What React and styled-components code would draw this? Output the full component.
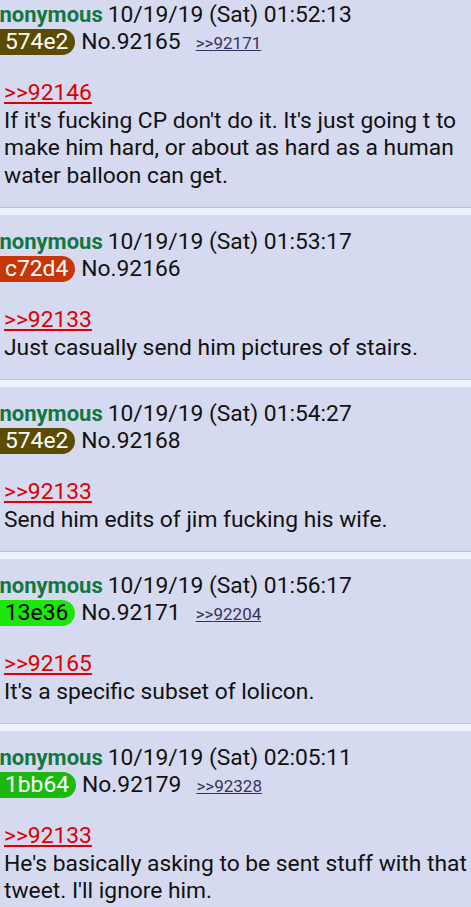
import React from "react";
import styled, { createGlobalStyle } from "styled-components";

const Global = createGlobalStyle`
  html, body { margin: 0; padding: 0; background: #eef2ff; }
  body { font-family: Roboto, "Noto Sans", sans-serif; overflow: hidden; }
`;

const Thread = styled.div`
  display: flex;
  flex-direction: column;
  gap: 7px;
  margin-top: -12px;
  width: 471px;
`;

const Post = styled.div`
  background: #d6daf0;
  border-bottom: 1px solid #b7c5d9;
  padding: 12px 0 18px 4px;
  overflow: hidden;
  color: #111;
`;

const InfoLine = styled.div`
  display: flex;
  align-items: center;
  height: 28px;
  font-size: 22.8px;
  white-space: nowrap;
  margin-left: -19px;
`;

const Name = styled.span`
  color: #117743;
  font-weight: bold;
  font-size: 22px;
  margin-right: 5px;
`;

const IdRow = styled.div`
  display: flex;
  align-items: center;
  height: 27px;
  font-size: 22.8px;
  white-space: nowrap;
  margin-left: -16px;
`;

const IdBadge = styled.span`
  display: inline-flex;
  align-items: center;
  height: 26px;
  border-radius: 13px;
  padding: 0 7px 0 17px;
  background: ${(p) => p.$bg};
  color: ${(p) => p.$fg};
  margin-right: 6px;
`;

const Backlink = styled.a`
  font-size: 17px;
  color: #34345c;
  text-decoration: underline;
  margin-left: 15px;
  margin-top: 3px;
`;

const Body = styled.blockquote`
  margin: 24px 0 0 0;
  font-size: 22.8px;
  line-height: 27.5px;
`;

const Quote = styled.a`
  color: #dd0000;
  text-decoration: underline;
  display: inline-block;
`;

const posts = [
  { time: "01:52:13", id: "574e2", bg: "#5c4c02", fg: "#fff", no: "92165", back: "92171", quote: "92146",
    text: "If it's fucking CP don't do it. It's just going t to make him hard, or about as hard as a human water balloon can get." },
  { time: "01:53:17", id: "c72d4", bg: "#c73606", fg: "#fff", no: "92166", quote: "92133",
    text: "Just casually send him pictures of stairs." },
  { time: "01:54:27", id: "574e2", bg: "#5c4c02", fg: "#fff", no: "92168", quote: "92133",
    text: "Send him edits of jim fucking his wife." },
  { time: "01:56:17", id: "13e36", bg: "#1ee60c", fg: "#000", no: "92171", back: "92204", quote: "92165",
    text: "It's a specific subset of lolicon." },
  { time: "02:05:11", id: "1bb64", bg: "#1db80e", fg: "#fff", no: "92179", back: "92328", quote: "92133",
    text: "He's basically asking to be sent stuff with that tweet. I'll ignore him." },
];

export default function App() {
  return (
    <>
      <Global />
      <Thread>
        {posts.map((p) => (
          <Post key={p.no}>
            <InfoLine>
              <Name>Anonymous</Name>
              <span>10/19/19 (Sat) {p.time}</span>
            </InfoLine>
            <IdRow>
              <IdBadge $bg={p.bg} $fg={p.fg}>{p.id}</IdBadge>
              <span>No.{p.no}</span>
              {p.back && <Backlink href="#">&gt;&gt;{p.back}</Backlink>}
            </IdRow>
            <Body>
              <Quote href="#">&gt;&gt;{p.quote}</Quote>
              <br />
              {p.text}
            </Body>
          </Post>
        ))}
      </Thread>
    </>
  );
}
